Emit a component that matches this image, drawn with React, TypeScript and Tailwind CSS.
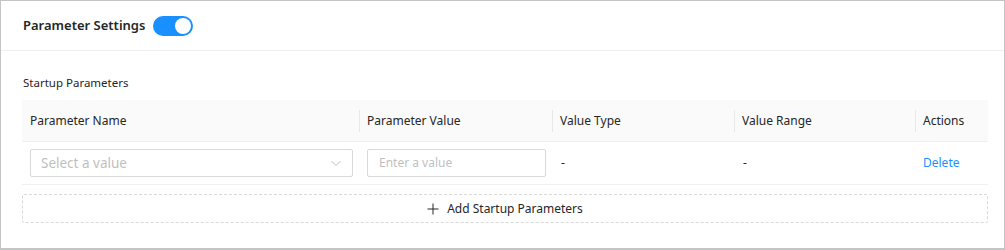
import React from "react";

export default function App() {
  const font = { fontFamily: '"Noto Sans", "Open Sans", sans-serif' };
  return (
    <div
      className="w-[1005px] h-[250px] bg-white border border-[#c4c4c4] border-b-2 flex flex-col text-[#262626]"
      style={font}
    >
      <div className="h-[50px] flex items-center gap-[8px] px-[22px] border-b border-[#f0f0f0] shrink-0">
        <span className="text-[13px] font-semibold text-[#262626]">Parameter Settings</span>
        <div className="w-[40px] h-[20px] rounded-full bg-[#1890ff] flex items-center justify-end px-[2px]">
          <div className="w-[16px] h-[16px] rounded-full bg-white" />
        </div>
      </div>
      <div className="px-[21px] pt-[24px]">
        <div className="text-[11.5px] text-[#262626] leading-[16px] mb-[9px] pl-[1px]">Startup Parameters</div>
        <div className="w-[966px]">
          <div className="grid grid-cols-[337px_193px_182px_181px_73px] h-[42px] bg-[#fafafa] border-b border-[#f0f0f0] text-[12px] text-[#262626]">
            <div className="flex items-center px-[8px] pt-[1px]">Parameter Name</div>
            <div className="flex items-center px-[8px] pt-[1px] relative">
              <span className="absolute left-0 top-[10px] h-[22px] w-px bg-[#e8e8e8]" />
              Parameter Value
            </div>
            <div className="flex items-center px-[8px] pt-[1px] relative">
              <span className="absolute left-0 top-[10px] h-[22px] w-px bg-[#e8e8e8]" />
              Value Type
            </div>
            <div className="flex items-center px-[8px] pt-[1px] relative">
              <span className="absolute left-0 top-[10px] h-[22px] w-px bg-[#e8e8e8]" />
              Value Range
            </div>
            <div className="flex items-center px-[8px] pt-[1px] relative">
              <span className="absolute left-0 top-[10px] h-[22px] w-px bg-[#e8e8e8]" />
              Actions
            </div>
          </div>
          <div className="grid grid-cols-[337px_193px_182px_181px_73px] h-[43px] border-b border-[#f0f0f0] text-[12px]">
            <div className="flex items-center pl-[8px] pr-[6px]">
              <div className="w-[323px] shrink-0 h-[28px] border border-[#d9d9d9] rounded-[2px] flex items-center justify-between pl-[10px] pr-[10px]">
                <span className="text-[#bfbfbf] text-[13.5px]">Select a value</span>
                <svg width="12" height="12" viewBox="0 0 12 12" fill="none">
                  <path d="M1.5 4 L6 8.5 L10.5 4" stroke="#bfbfbf" strokeWidth="1" />
                </svg>
              </div>
            </div>
            <div className="flex items-center pl-[8px] pr-[6px]">
              <div className="w-[179px] shrink-0 h-[28px] border border-[#d9d9d9] rounded-[2px] flex items-center pl-[11px]">
                <span className="text-[#bfbfbf] text-[12px]">Enter a value</span>
              </div>
            </div>
            <div className="flex items-center px-[9px] text-[12px]">-</div>
            <div className="flex items-center px-[9px] text-[12px]">-</div>
            <div className="flex items-center px-[8px] text-[12px] text-[#1890ff]">Delete</div>
          </div>
          <div className="mt-[9px] h-[29px] border border-dashed border-[#d9d9d9] rounded-[2px] flex items-center justify-center gap-[8px] text-[12px] text-[#262626]">
            <svg width="12" height="12" viewBox="0 0 12 12" fill="none">
              <path d="M6 0.5 V11.5 M0.5 6 H11.5" stroke="#262626" strokeWidth="1" />
            </svg>
            <span>Add Startup Parameters</span>
          </div>
        </div>
      </div>
    </div>
  );
}
